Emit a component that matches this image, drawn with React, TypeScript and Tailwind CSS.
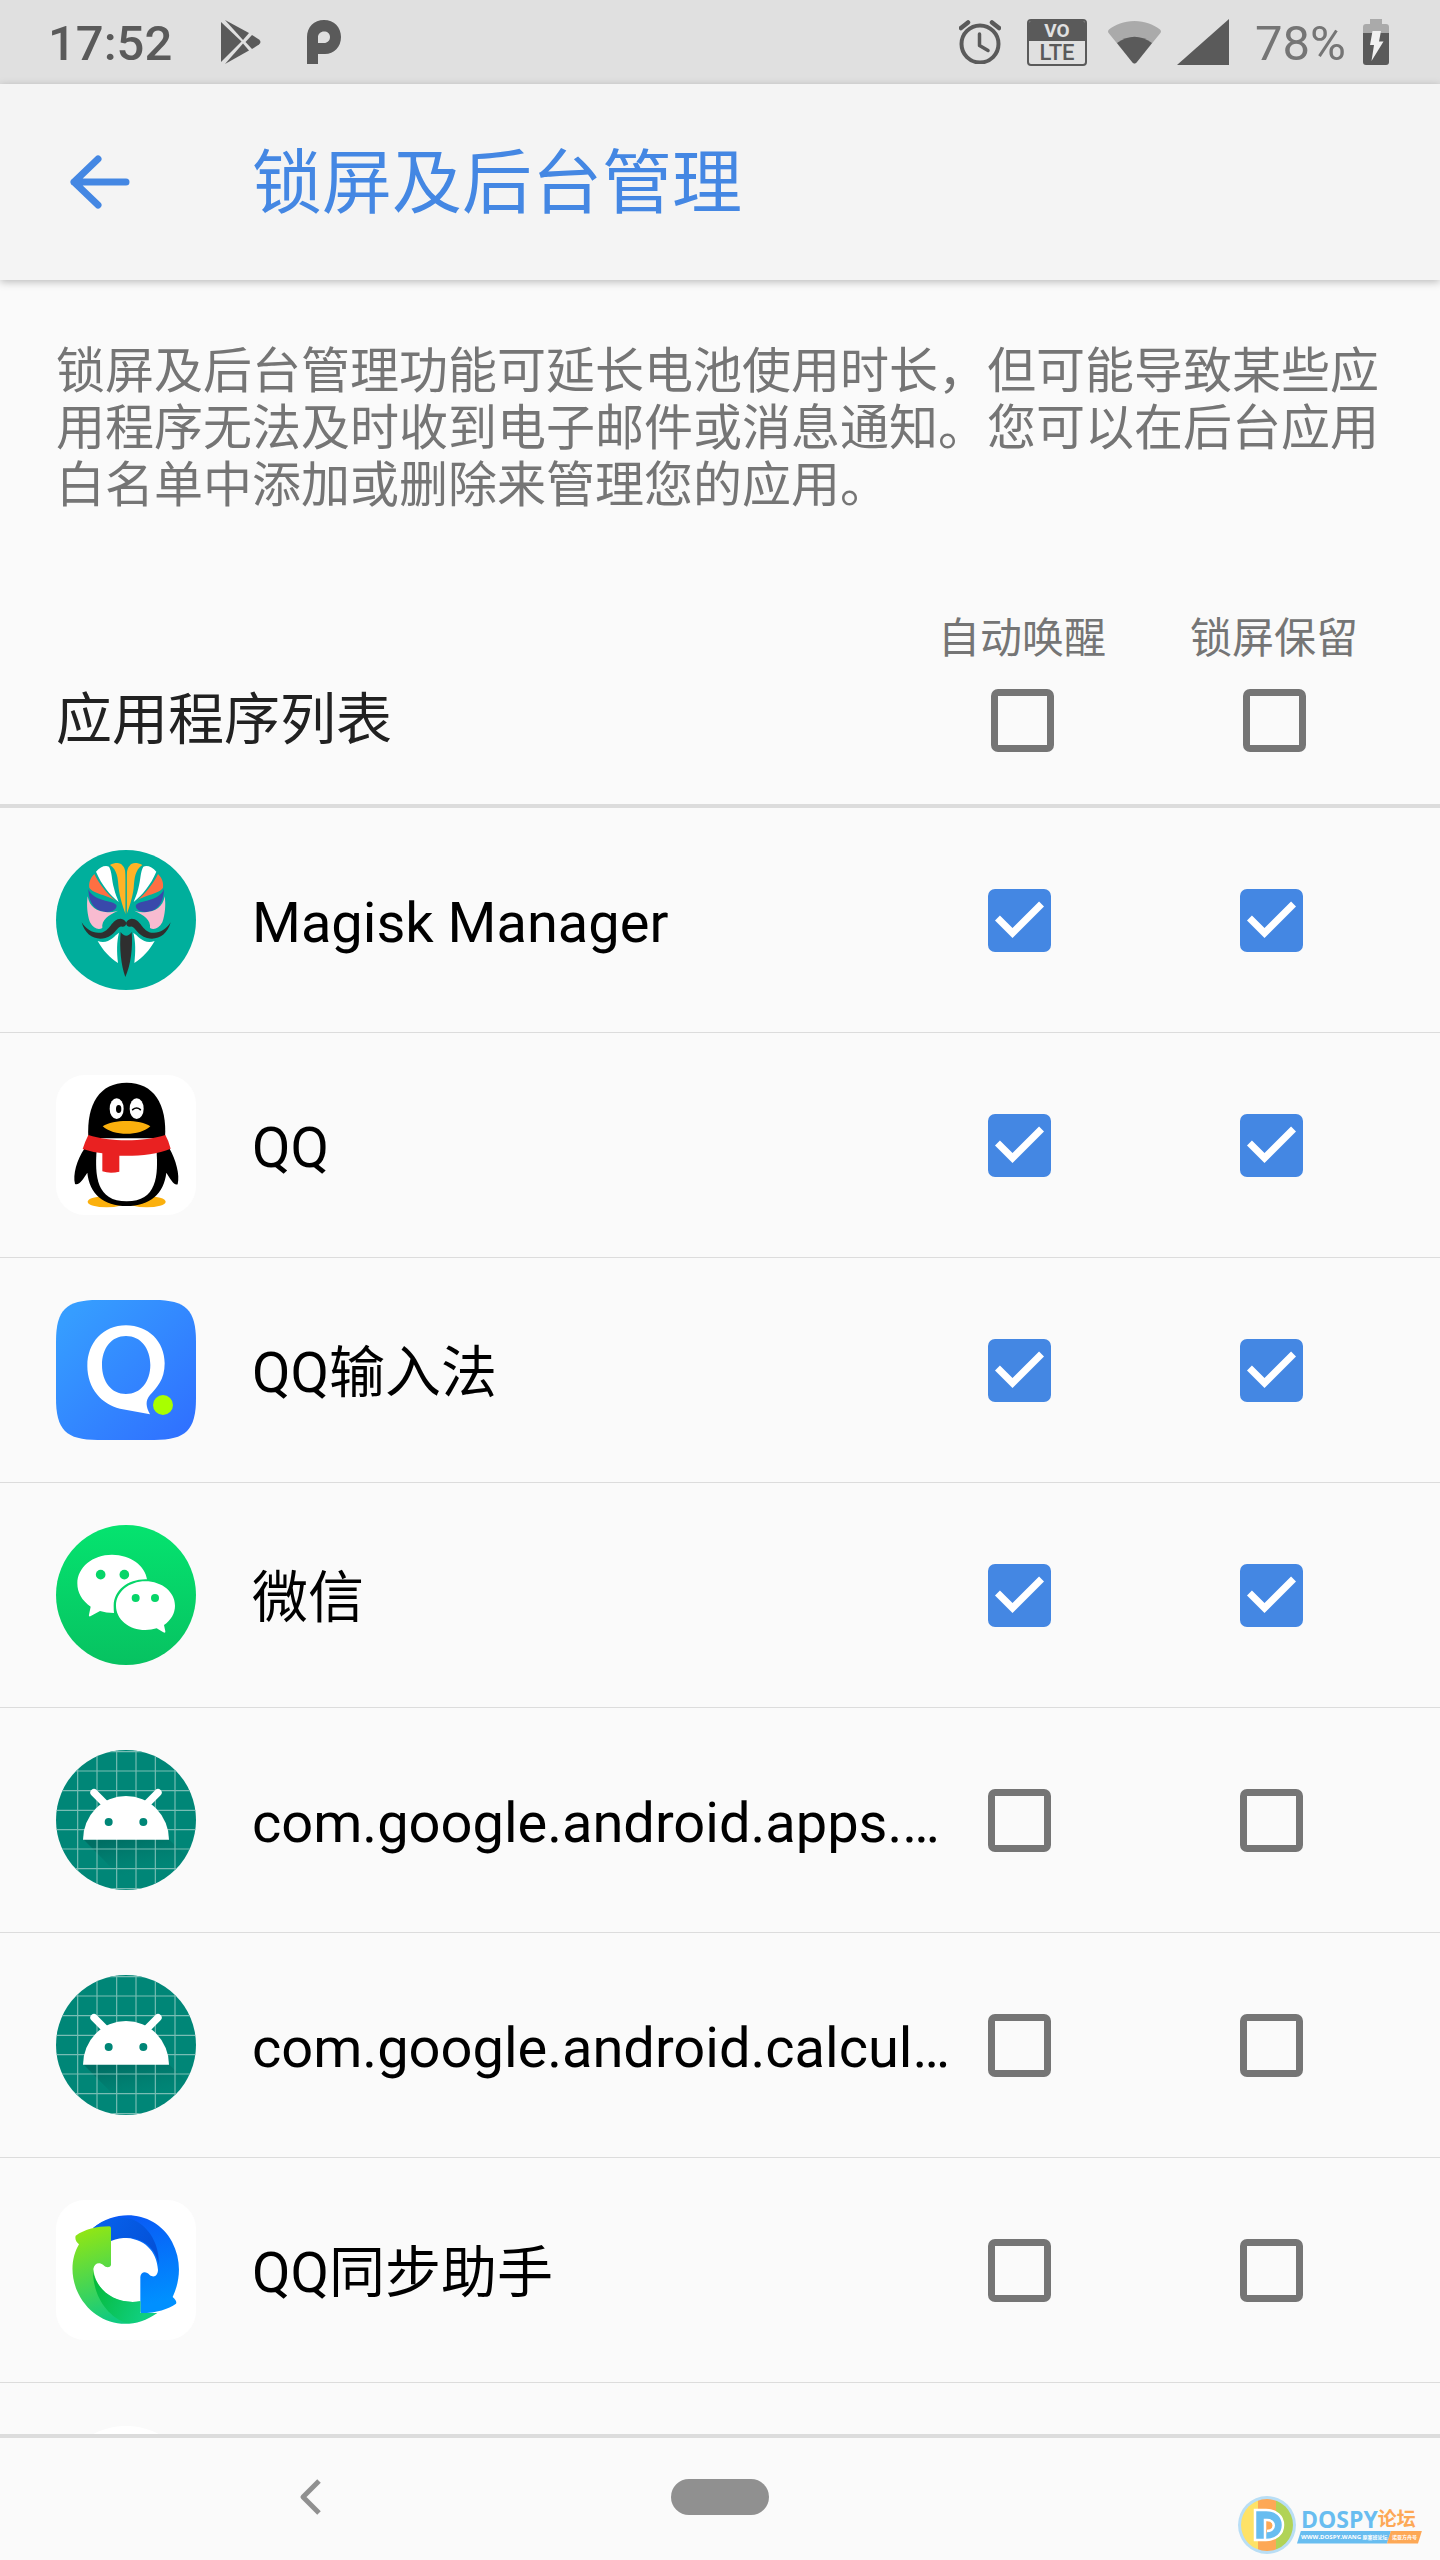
import React, { useState } from "react";

function StatusBar() {
  return (
    <div className="flex h-[84px] shrink-0 items-center justify-between bg-[#e0e0e0] pl-12 pr-[51px] text-[49px] leading-[56px] text-[#5a5a5a]">
      <div className="flex items-center">
        <span className="pt-1 font-medium">17:52</span>
        <svg className="ml-[49px] h-11 w-10" viewBox="0 0 40 44" fill="currentColor" aria-hidden="true">
          <path d="M0 2L20.500 21.500L0 42Z" />
          <path d="M4 0L28 13L22 20Z" />
          <path d="M4 44L28 30.500L22 23.500Z" />
          <path d="M31 15L38 19.500Q41 22 38 24.500L31 29L24.500 22Z" />
        </svg>
        <svg className="ml-[46px] h-11 w-[34px]" viewBox="0 0 34 44" aria-hidden="true">
          <path
            fill="currentColor"
            fillRule="evenodd"
            d="M0 44V17C0 7 7 0 17 0S34 7 34 17S27 34 18 34H11V44ZM11 23H17C20.500 23 23 20.500 23 17S20.500 11.500 17 11.500S11 14 11 17Z"
          />
        </svg>
      </div>
      <div className="flex items-center">
        <svg className="h-11 w-[42px]" viewBox="0 0 42 44" fill="none" stroke="currentColor" aria-hidden="true">
          <circle cx="21" cy="24" r="18.500" strokeWidth="4" />
          <path d="M20.500 14V25.500L29 30.500" strokeWidth="3.500" strokeLinecap="round" strokeLinejoin="round" />
          <path d="M2 8L9 2.500M40 8L33 2.500" strokeWidth="4.500" strokeLinecap="round" />
        </svg>
        <div className="ml-[26px] flex h-[47px] w-[60px] flex-col overflow-hidden rounded border-2 border-[#5a5a5a] text-center">
          <span className="h-[21px] bg-[#5a5a5a] text-[19px] leading-[19px] font-bold text-[#e0e0e0]">VO</span>
          <span className="text-[22px] leading-[23px] font-medium">LTE</span>
        </div>
        <svg className="ml-[21px] h-[43px] w-[53px]" viewBox="0 0 53 43" aria-hidden="true">
          <path fill="#aaaaaa" d="M26.500 0C16 0 7 4 1 8.500Q-1 10.500 1 12.500L24.500 41.500Q26.500 43.500 28.500 41.500L52 12.500Q54 10.500 52 8.500C46 4 37 0 26.500 0Z" />
          <path fill="currentColor" d="M9 22Q26.500 9.500 44 22L28.500 41.500Q26.500 43.500 24.500 41.500Z" />
        </svg>
        <svg className="ml-4 h-[46px] w-[52px]" viewBox="0 0 52 46" aria-hidden="true">
          <path fill="currentColor" d="M52 0V46H0Z" />
        </svg>
        <span className="ml-[26px] pt-1 text-[#757575]">78%</span>
        <svg className="ml-[17px] h-[46px] w-[26px]" viewBox="0 0 26 46" aria-hidden="true">
          <path fill="#aaaaaa" d="M7 0H19V5H23Q26 5 26 8V15H0V8Q0 5 3 5H7Z" />
          <path fill="currentColor" d="M0 14H26V43Q26 46 23 46H3Q0 46 0 43Z" />
          <path fill="#f0f0f0" d="M9.500 12H18L16 22.500H20.500L8.500 42L11 26H7Z" />
        </svg>
      </div>
    </div>
  );
}

function MagiskHalf() {
  return (
    <>
      <path fill="#ffb326" d="M210 90C226 82 242 82 248 92C256 100 257 112 257 135V238C250 220 240 190 236 160C234 130 232 105 210 90Z" />
      <path fill="#fff" d="M168 110C180 96 195 90 207 95C216 110 215 135 222 160C226 178 232 190 236 201C210 180 185 150 168 110Z" />
      <path fill="#ff6f43" d="M163 117C150 130 146 145 148 158C158 176 205 180 226 197C200 175 176 145 163 117Z" />
      <path fill="#3949ab" d="M145 162C146 205 165 228 196 231C220 233 233 219 229 210C220 196 160 200 145 162Z" />
      <path fill="#f8bbd0" d="M143 184C150 225 185 240 234 227C205 240 184 255 187 279C175 286 160 280 150 262C142 240 139 210 143 184Z" />
      <path fill="#2f2f2f" d="M125 262C140 285 160 296 182 293C210 290 215 251 242 251Q254 252 259 264Q258 276 246 275C232 270 228 300 196 309C165 317 135 300 125 262Z" />
      <path fill="#fff" d="M173 318C205 330 222 303 237 293C230 320 230 350 234 384C210 370 188 345 173 318Z" />
    </>
  );
}

function MagiskIcon() {
  return (
    <svg className="size-full" viewBox="48 45 420 420" aria-hidden="true">
      <circle cx="258" cy="255" r="210" fill="#00af9c" />
      <MagiskHalf />
      <g transform="matrix(-1 0 0 1 517 0)">
        <MagiskHalf />
      </g>
      <path d="M258.500 100V238" stroke="#00af9c" strokeWidth="3" />
      <path fill="#2f2f2f" d="M242 291Q259 314 275 291C279 340 272 390 256 426C243 390 238 340 242 291Z" />
    </svg>
  );
}

function QQIcon() {
  return (
    <svg className="size-full" viewBox="48 45 420 420" aria-hidden="true">
      <rect x="48" y="45" width="420" height="420" rx="86" fill="#fff" />
      <ellipse cx="200" cy="425" rx="57" ry="17" fill="#fbb00d" />
      <ellipse cx="320" cy="425" rx="57" ry="17" fill="#fbb00d" />
      <path d="M134 265C110 300 98 345 105 372C118 378 130 355 142 338C148 400 190 438 260 438S372 400 379 338C390 355 402 378 413 373C420 345 408 300 388 265Z" fill="#000" />
      <path d="M170 270C164 350 170 424 260 424S356 350 349 265Z" fill="#fff" />
      <path d="M145 235C139 130 180 68 260 68S382 130 375 235Z" fill="#000" />
      <path d="M145 225C210 246 310 246 376 225Q386 242 392 266C350 284 290 289 238 287V335Q210 342 187 334V280Q155 276 128 267Q135 245 145 225Z" fill="#e92121" />
      <ellipse cx="230" cy="146" rx="21" ry="31" fill="#fff" />
      <ellipse cx="290" cy="146" rx="21" ry="31" fill="#fff" />
      <ellipse cx="236" cy="147" rx="8" ry="12" fill="#000" />
      <path d="M278 149Q290 139 301 149" stroke="#000" strokeWidth="5" strokeLinecap="round" fill="none" />
      <path d="M188 199C220 178 300 178 331 199C300 229 220 229 188 199Z" fill="#fbb00d" />
    </svg>
  );
}

function QQInputIcon() {
  return (
    <svg className="size-full" viewBox="48 45 420 420" aria-hidden="true">
      <defs>
        <linearGradient id="qq-input-bg" x1="0" y1="0" x2="1" y2="1">
          <stop offset="0.100" stopColor="#369dff" />
          <stop offset="1" stopColor="#2f6eff" />
        </linearGradient>
      </defs>
      <path d="M48 170C48 75 78 45 173 45H343C438 45 468 75 468 170V340C468 435 438 465 343 465H173C78 465 48 435 48 340Z" fill="url(#qq-input-bg)" />
      <path
        d="M258 121C190 121 142 172 142 243C142 310 185 358 240 371L330 388C318 365 315 348 330 330C350 308 374 285 374 235C374 170 325 121 258 121ZM258 153C302 153 331 190 331 240S302 327 258 327S186 290 186 240S214 153 258 153Z"
        fill="#fff"
        fillRule="evenodd"
      />
      <circle cx="369" cy="360" r="30" fill="#a8ff00" />
    </svg>
  );
}

function WeChatIcon() {
  return (
    <svg className="size-full" viewBox="48 45 420 420" aria-hidden="true">
      <defs>
        <linearGradient id="wechat-bg" x1="0" y1="0" x2="0" y2="1">
          <stop offset="0" stopColor="#05e36f" />
          <stop offset="1" stopColor="#07c261" />
        </linearGradient>
      </defs>
      <circle cx="258" cy="255" r="210" fill="url(#wechat-bg)" />
      <path d="M222 309Q198 309 180 303L151 319Q145 320 147 314L152 290C125 271 112 248 112 220C112 172 158 134 216 134C272 134 316 168 321 208C265 206 222 240 221 287Q221 300 222 309Z" fill="#fff" />
      <path d="M316 214C366 214 405 246 405 287C405 310 393 330 372 345L376 364Q377 371 370 367L350 355Q334 360 316 360C267 360 228 328 228 287S267 214 316 214Z" fill="#fff" />
      <g fill="#06d568">
        <circle cx="182" cy="194" r="14.500" />
        <circle cx="253" cy="194" r="14.500" />
        <circle cx="287" cy="264" r="12" />
        <circle cx="345" cy="264" r="12" />
      </g>
    </svg>
  );
}

function AndroidIcon() {
  return (
    <svg className="size-full" viewBox="48 45 420 420" aria-hidden="true">
      <defs>
        <clipPath id="android-disc">
          <circle cx="258" cy="255" r="210" />
        </clipPath>
        <linearGradient id="android-shade" x1="0.300" y1="0" x2="0.700" y2="1">
          <stop offset="0" stopColor="#00695f" stopOpacity="0.800" />
          <stop offset="0.600" stopColor="#00796b" stopOpacity="0" />
        </linearGradient>
      </defs>
      <g clipPath="url(#android-disc)">
        <rect x="48" y="45" width="420" height="420" fill="#008677" />
        <path d="M130 313L290 475H468V390L386 313Z" fill="url(#android-shade)" />
        <path
          d="M113 45V465M171 45V465M230 45V465M288 45V465M346 45V465M405 45V465M48 50H468M48 108H468M48 167H468M48 226H468M48 284H468M48 342H468M48 401H468M48 461H468"
          stroke="#78bdb4"
          strokeWidth="3.500"
        />
      </g>
      <path d="M129 314A129 131 0 0 1 387 314Z" fill="#fff" />
      <path d="M162 173L200 211M354 173L316 211" stroke="#fff" strokeWidth="22" strokeLinecap="round" />
      <circle cx="206" cy="261" r="12" fill="#008677" />
      <circle cx="310" cy="261" r="12" fill="#008677" />
    </svg>
  );
}

function SyncIcon() {
  return (
    <svg className="size-full" viewBox="48 45 420 420" aria-hidden="true">
      <defs>
        <linearGradient id="sync-green" x1="0" y1="0" x2="0.300" y2="1">
          <stop offset="0" stopColor="#9be80c" />
          <stop offset="1" stopColor="#10ca80" />
        </linearGradient>
        <linearGradient id="sync-blue" x1="0" y1="0" x2="0.200" y2="1">
          <stop offset="0" stopColor="#0a55f5" />
          <stop offset="1" stopColor="#0090ff" />
        </linearGradient>
        <linearGradient id="sync-blue-dark" x1="0" y1="0" x2="1" y2="0.500">
          <stop offset="0" stopColor="#0763ee" />
          <stop offset="1" stopColor="#0451d8" />
        </linearGradient>
        <linearGradient id="sync-green-dark" x1="0" y1="0" x2="1" y2="0.400">
          <stop offset="0" stopColor="#04b834" />
          <stop offset="1" stopColor="#10cf80" />
        </linearGradient>
      </defs>
      <rect x="48" y="45" width="420" height="420" rx="86" fill="#fff" />
      <path d="M160 128C240 65 350 85 396 170C425 225 422 285 398 336Q412 348 408 356C385 372 350 384 304 384Q301 384 301 378V276C302 260 318 256 329 270C342 280 353 272 354 255C350 190 300 145 213 162L160 150Z" fill="url(#sync-blue)" />
      <path d="M160 128C200 98 245 94 280 104C330 125 360 185 356 238C345 175 285 140 213 168Z" fill="url(#sync-blue-dark)" />
      <path d="M107 152C135 133 170 124 208 124Q213 124 213 130V240C210 249 198 249 190 240C177 230 163 235 160 252C166 315 220 360 301 349V384H352C260 450 150 410 110 315C90 265 95 215 117 178Q103 166 107 152Z" fill="url(#sync-green)" />
      <path d="M159 262C172 315 225 360 301 349V384H345C310 408 285 414 260 414C200 395 160 330 159 262Z" fill="url(#sync-green-dark)" />
    </svg>
  );
}

function Tick({ label, initial }: { label: string; initial: boolean }) {
  const [checked, setChecked] = useState(initial);
  return (
    <span className="relative block size-[63px] shrink-0">
      <input
        type="checkbox"
        aria-label={label}
        checked={checked}
        onChange={(e) => setChecked(e.target.checked)}
        className="block size-full appearance-none rounded-[7px] border-[7px] border-[#757575] checked:border-[#4487e3] checked:bg-[#4487e3]"
      />
      {checked && (
        <svg className="pointer-events-none absolute inset-0 size-full" viewBox="3 3 18 18" fill="#fff" aria-hidden="true">
          <path d="M10 17l-5-5 1.410-1.410L10 14.170l7.590-7.590L19 8l-9 9z" />
        </svg>
      )}
    </span>
  );
}

const apps = [
  { name: "Magisk Manager", icon: MagiskIcon, on: true },
  { name: "QQ", icon: QQIcon, on: true },
  { name: "QQ输入法", icon: QQInputIcon, on: true },
  { name: "微信", icon: WeChatIcon, on: true },
  { name: "com.google.android.apps.…", icon: AndroidIcon, on: false },
  { name: "com.google.android.calcul…", icon: AndroidIcon, on: false },
  { name: "QQ同步助手", icon: SyncIcon, on: false },
];

const columns = ["自动唤醒", "锁屏保留"];

function Watermark() {
  return (
    <div className="absolute right-[18px] bottom-[6px] flex items-center gap-px">
      <svg className="size-[58px]" viewBox="0 0 58 58" aria-hidden="true">
        <defs>
          <clipPath id="dospy-disc">
            <circle cx="29" cy="29" r="26" />
          </clipPath>
        </defs>
        <circle cx="29" cy="29" r="29" fill="#b9def5" />
        <g clipPath="url(#dospy-disc)">
          <path fill="#fee267" d="M0 0H20V58H0Z" />
          <path fill="#fda856" d="M20 0H38V58H20Z" />
          <path fill="#b1d357" d="M38 0H58V58H38Z" />
        </g>
        <path d="M17 14H28C38 14 45 20 45 29S38 44 28 44H17Z" fill="#68bdf0" stroke="#fff" strokeWidth="2.500" />
        <path d="M27 43V24H29C38 24 38 35 29 35" fill="#fda856" stroke="#fff" strokeWidth="2.500" />
      </svg>
      <div className="flex flex-col">
        <div className="flex items-center pl-1 font-['Open_Sans','Noto_Sans_CJK_SC',sans-serif] leading-6 font-bold text-[#68bdf0]">
          <span className="text-[23px]">DOSPY</span>
          <span className="text-[19px] text-[#fda856]">论坛</span>
        </div>
        <div className="flex h-[13px] items-center font-['Open_Sans','Noto_Sans_CJK_SC',sans-serif] text-[6px] leading-[13px] font-bold whitespace-nowrap text-white">
          <span className="h-full w-[94px] bg-[#68bdf0] pl-1 [clip-path:polygon(4px_0,100%_0,calc(100%-4px)_100%,0_100%)]">
            WWW.DOSPY.WANG <span className="text-[5px]">原塞班论坛</span>
          </span>
          <span className="-ml-1 h-full w-[35px] bg-[#fda856] text-center text-[5px] [clip-path:polygon(4px_0,100%_0,calc(100%-4px)_100%,0_100%)]">
            诺亚方舟号
          </span>
        </div>
      </div>
    </div>
  );
}

export default function App() {
  return (
    <div lang="zh-CN" className="flex h-screen flex-col bg-[#fafafa] font-[Roboto,'Noto_Sans_CJK_SC',sans-serif] text-black">
      <StatusBar />
      <header className="relative flex h-[196px] shrink-0 items-center bg-[#f4f4f4] pl-[70px] text-[#4487e3] shadow-[0_2px_8px_rgba(0,0,0,0.250)]">
        <button type="button" aria-label="返回" className="w-[182px]">
          <svg className="h-[54px] w-[60px]" viewBox="0 0 60 54" fill="none" stroke="currentColor" strokeWidth="7" strokeLinecap="round" strokeLinejoin="round" aria-hidden="true">
            <path d="M28 4L4 27L28 50M4 27H56" />
          </svg>
        </button>
        <h1 className="pt-1 text-[70px] leading-[80px]">锁屏及后台管理</h1>
      </header>
      <main className="flex min-h-0 flex-1 flex-col">
        <p className="px-14 pt-[63px] text-[49px] leading-[57px] text-[#757575]">
          锁屏及后台管理功能可延长电池使用时长，但可能导致某些应用程序无法及时收到电子邮件或消息通知。您可以在后台应用白名单中添加或删除来管理您的应用。
        </p>
        <div className="mt-[101px] flex items-end justify-between border-b-4 border-[#dcdcdc] pr-[82px] pb-[52px] pl-14">
          <h2 className="text-[56px] leading-[64px] text-[#212121]">应用程序列表</h2>
          <div className="flex gap-[84px]">
            {columns.map((c) => (
              <div key={c} className="flex w-[168px] flex-col items-center gap-[26px]">
                <span className="text-[42px] leading-[48px] text-[#757575]">{c}</span>
                <Tick label={c} initial={false} />
              </div>
            ))}
          </div>
        </div>
        <ul className="min-h-0 flex-1 overflow-y-auto [scrollbar-width:none]">
          {apps.map((app) => (
            <li key={app.name} className="flex h-[225px] items-center border-b border-[#dcdcdc] pr-[137px] pl-14">
              <span className="size-[140px] shrink-0">
                <app.icon />
              </span>
              <span className="ml-14 min-w-0 flex-1 truncate pt-[6px] text-[56px] leading-[66px]">{app.name}</span>
              <span className="ml-9 flex gap-[189px]">
                {columns.map((c) => (
                  <Tick key={c} label={`${app.name} ${c}`} initial={app.on} />
                ))}
              </span>
            </li>
          ))}
          <li className="flex h-[225px] items-center pl-14">
            <span className="size-[140px] rounded-full bg-white" />
          </li>
        </ul>
      </main>
      <nav className="relative grid h-[126px] shrink-0 grid-cols-3 items-center border-t-4 border-[#dcdcdc] px-[106px] pb-1 text-[#909090]">
        <button type="button" aria-label="后退" className="flex h-full items-center justify-center">
          <svg className="h-9 w-6" viewBox="0 0 24 36" fill="none" stroke="currentColor" strokeWidth="5" strokeLinejoin="round" aria-hidden="true">
            <path d="M20 2L4 18L20 34" />
          </svg>
        </button>
        <button type="button" aria-label="主屏幕" className="flex h-full items-center justify-center">
          <span className="h-9 w-[98px] rounded-full bg-[#909090]" />
        </button>
        <Watermark />
      </nav>
    </div>
  );
}
